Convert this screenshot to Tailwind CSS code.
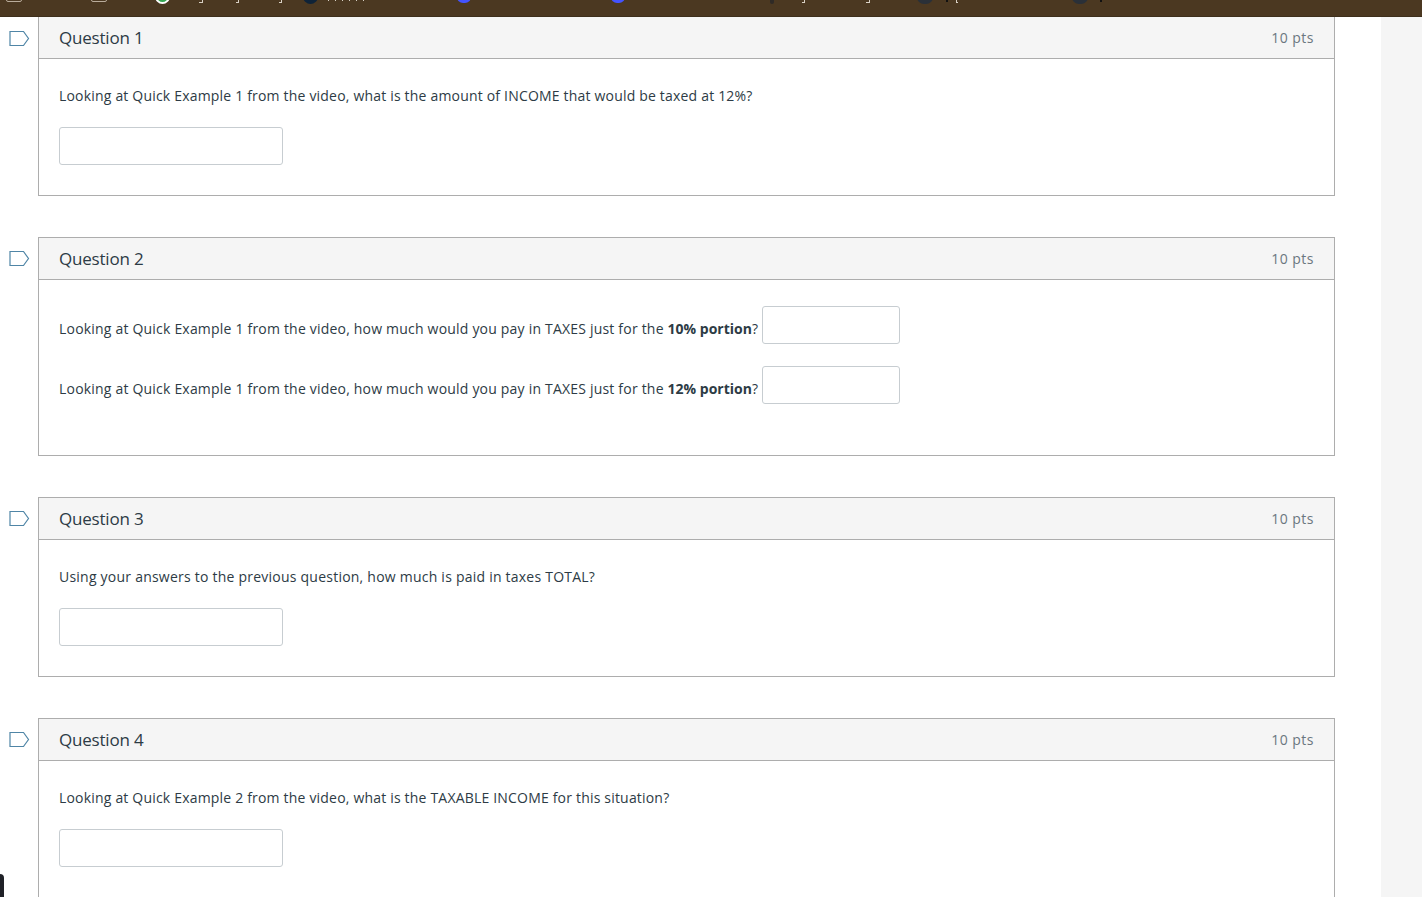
<!DOCTYPE html>
<html>
<head>
<meta charset="utf-8">
<script src="https://cdn.jsdelivr.net/npm/@tailwindcss/browser@4"></script>
</head>
<body class="bg-white overflow-hidden">
<div class="relative h-[897px] w-[1422px] overflow-hidden bg-white font-['Open_Sans','Noto_Sans',sans-serif] text-[14px] text-[#2d3b45]">
  <div class="relative z-10 h-[17px] overflow-hidden border-b border-[#3e2f1c] bg-[#4b3821]">
    <div class="absolute left-[6px] top-[-8px] h-[10px] w-[16px] rounded-[2px] border border-[#b9ac9b]"></div>
    <div class="absolute left-[91px] top-[-8px] h-[10px] w-[16px] rounded-[2px] border border-[#b9ac9b]"></div>
    <div class="absolute left-[155px] top-[-11px] h-[15px] w-[15px] rounded-full border-[2px] border-white bg-[#34a853]"></div>
    <div class="absolute left-[199px] top-0 h-[3px] w-[4px] border-r border-b border-[#d8d0c4]"></div>
    <div class="absolute left-[236px] top-0 h-[3px] w-[3px] border-r border-b border-[#d8d0c4]"></div>
    <div class="absolute left-[279px] top-0 h-[3px] w-[3px] border-r border-b border-[#d8d0c4]"></div>
    <div class="absolute left-[303px] top-[-11px] h-[15px] w-[15px] rounded-full bg-[#0f2338]"></div>
    <div class="absolute left-[328px] top-0 h-[1px] w-[38px] bg-[repeating-linear-gradient(90deg,#d8d0c4_0_1px,transparent_1px_7px)]"></div>
    <div class="absolute left-[457px] top-[-9px] h-[12px] w-[14px] rounded-full border-[3px] border-[#4353ff]"></div>
    <div class="absolute left-[611px] top-[-9px] h-[12px] w-[14px] rounded-full border-[3px] border-[#4353ff]"></div>
    <div class="absolute left-[770px] top-[-3px] h-[7px] w-[4px] rounded-full bg-[#2f2a26]"></div>
    <div class="absolute left-[802px] top-0 h-[3px] w-[3px] border-r border-b border-[#d8d0c4]"></div>
    <div class="absolute left-[866px] top-0 h-[3px] w-[4px] border-r border-b border-[#d8d0c4]"></div>
    <div class="absolute left-[917px] top-[-10px] h-[14px] w-[16px] rounded-full bg-[#2a3038]"></div>
    <div class="absolute left-[946px] top-0 h-[2px] w-[2px] bg-[#111]"></div>
    <div class="absolute left-[956px] top-0 h-[3px] w-[2px] border-l border-b border-[#d8d0c4]"></div>
    <div class="absolute left-[1072px] top-[-10px] h-[14px] w-[16px] rounded-full bg-[#2a3038]"></div>
    <div class="absolute left-[1100px] top-0 h-[2px] w-[2px] bg-[#111]"></div>
  </div>
  <div class="flex">
    <div class="flex w-[1381px] flex-col gap-[41px] pl-[38px]">
      <section class="relative w-[1297px] border-x border-b border-[#adadad]">
        <svg class="absolute left-[-30px] top-[13px]" width="21" height="17" viewBox="0 0 21 17" fill="none"><path d="M1 1.5H14.5L19.5 8.5L14.5 15.5H1Z" stroke="#4f85a6" stroke-width="1.2"/></svg>
        <header class="flex h-[42px] items-center justify-between border-b border-[#adadad] bg-[#f5f5f5] pl-5 pr-5">
          <h2 class="text-[17px] font-normal tracking-[-0.2px] text-[#2d3b45]">Question 1</h2><span class="text-[14px] tracking-[0.5px] text-[#6b7780]">10 pts</span>
        </header>
        <div class="h-[136px] px-5 pt-[27px]">
          <p class="leading-[20px] tracking-[0.19px]">Looking at Quick Example 1 from the video, what is the amount of INCOME that would be taxed at 12%?</p>
          <input class="mt-[21px] block h-[38px] w-[224px] rounded-[3px] border border-[#c7cdd1] bg-white">
        </div>
      </section>
      <section class="relative w-[1297px] border border-[#adadad]">
        <svg class="absolute left-[-30px] top-[12px]" width="21" height="17" viewBox="0 0 21 17" fill="none"><path d="M1 1.5H14.5L19.5 8.5L14.5 15.5H1Z" stroke="#4f85a6" stroke-width="1.2"/></svg>
        <header class="flex h-[42px] items-center justify-between border-b border-[#adadad] bg-[#f5f5f5] pl-5 pr-5">
          <h2 class="text-[17px] font-normal tracking-[-0.2px] text-[#2d3b45]">Question 2</h2><span class="text-[14px] tracking-[0.5px] text-[#6b7780]">10 pts</span>
        </header>
        <div class="h-[175px] px-5 pt-[26px]">
          <div class="flex h-[38px] items-center gap-[4px]"><p class="pt-[7px] tracking-[0.2px]">Looking at Quick Example 1 from the video, how much would you pay in TAXES just for the <b class="tracking-normal">10% portion</b>?</p><input class="h-[38px] w-[138px] rounded-[3px] border border-[#c7cdd1] bg-white"></div>
          <div class="mt-[22px] flex h-[38px] items-center gap-[4px]"><p class="pt-[7px] tracking-[0.2px]">Looking at Quick Example 1 from the video, how much would you pay in TAXES just for the <b class="tracking-normal">12% portion</b>?</p><input class="h-[38px] w-[138px] rounded-[3px] border border-[#c7cdd1] bg-white"></div>
        </div>
      </section>
      <section class="relative w-[1297px] border border-[#adadad]">
        <svg class="absolute left-[-30px] top-[12px]" width="21" height="17" viewBox="0 0 21 17" fill="none"><path d="M1 1.5H14.5L19.5 8.5L14.5 15.5H1Z" stroke="#4f85a6" stroke-width="1.2"/></svg>
        <header class="flex h-[42px] items-center justify-between border-b border-[#adadad] bg-[#f5f5f5] pl-5 pr-5">
          <h2 class="text-[17px] font-normal tracking-[-0.2px] text-[#2d3b45]">Question 3</h2><span class="text-[14px] tracking-[0.5px] text-[#6b7780]">10 pts</span>
        </header>
        <div class="h-[136px] px-5 pt-[27px]">
          <p class="leading-[20px] tracking-[0.23px]">Using your answers to the previous question, how much is paid in taxes TOTAL?</p>
          <input class="mt-[21px] block h-[38px] w-[224px] rounded-[3px] border border-[#c7cdd1] bg-white">
        </div>
      </section>
      <section class="relative w-[1297px] border border-[#adadad]">
        <svg class="absolute left-[-30px] top-[12px]" width="21" height="17" viewBox="0 0 21 17" fill="none"><path d="M1 1.5H14.5L19.5 8.5L14.5 15.5H1Z" stroke="#4f85a6" stroke-width="1.2"/></svg>
        <header class="flex h-[42px] items-center justify-between border-b border-[#adadad] bg-[#f5f5f5] pl-5 pr-5">
          <h2 class="text-[17px] font-normal tracking-[-0.2px] text-[#2d3b45]">Question 4</h2><span class="text-[14px] tracking-[0.5px] text-[#6b7780]">10 pts</span>
        </header>
        <div class="h-[136px] px-5 pt-[27px]">
          <p class="leading-[20px] tracking-[0.19px]">Looking at Quick Example 2 from the video, what is the TAXABLE INCOME for this situation?</p>
          <input class="mt-[21px] block h-[38px] w-[224px] rounded-[3px] border border-[#c7cdd1] bg-white">
        </div>
      </section>
    </div>
    <div class="h-[880px] w-[41px] bg-[#f5f5f5]"></div>
  </div>
  <div class="absolute bottom-0 left-0 h-[23px] w-1 rounded-tr-sm bg-[#1f2127]"></div>
</div>
</body>
</html>
